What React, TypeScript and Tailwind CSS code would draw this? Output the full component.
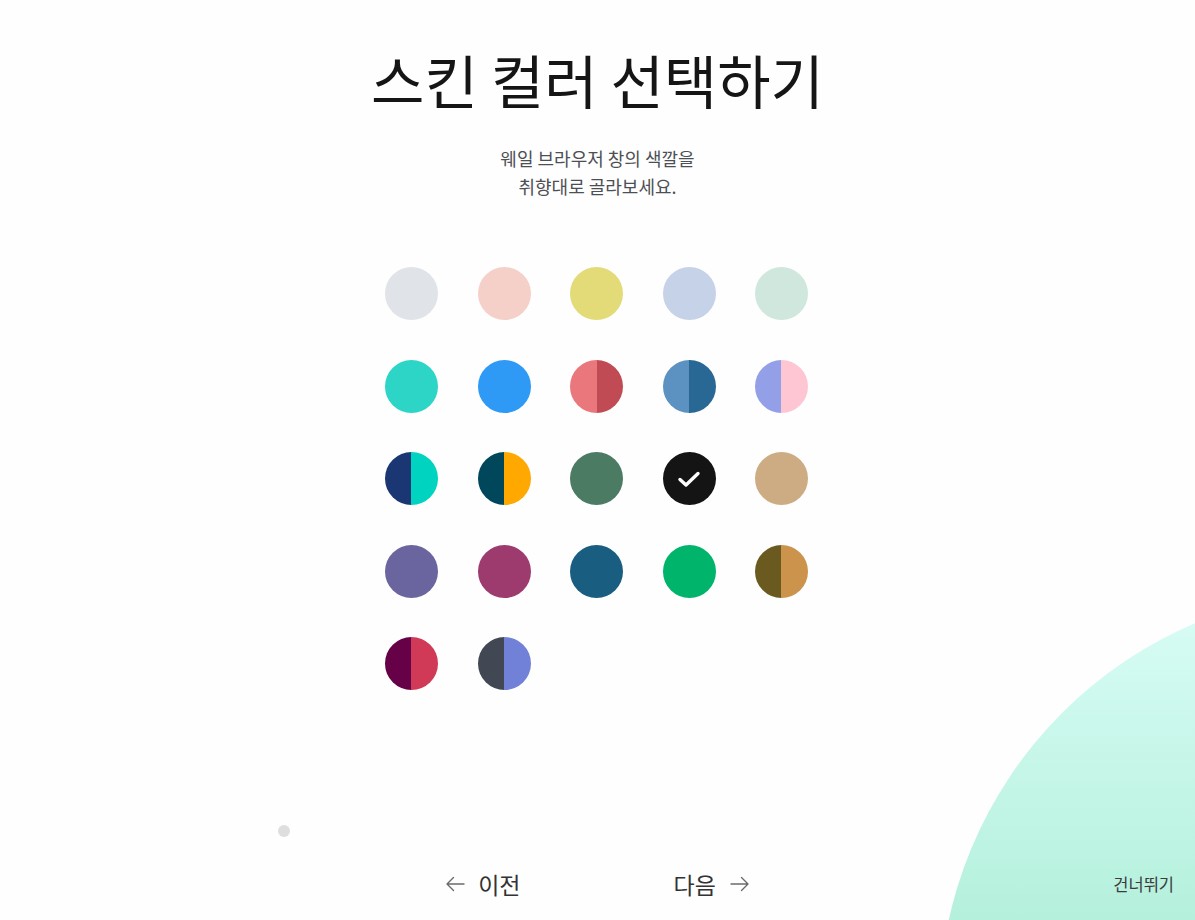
import React from "react";

type Swatch = { a: string; b?: string; selected?: boolean };

const swatches: Swatch[] = [
  { a: "#e0e3e8" },
  { a: "#f5d0c8" },
  { a: "#e2db78" },
  { a: "#c5d2e8" },
  { a: "#cfe7dc" },
  { a: "#2dd5c7" },
  { a: "#2e9af5" },
  { a: "#e9777c", b: "#c14b54" },
  { a: "#5b92c1", b: "#296894" },
  { a: "#93a0e8", b: "#fec6d3" },
  { a: "#1a3773", b: "#00d4c0" },
  { a: "#01475b", b: "#ffa800" },
  { a: "#4c7b64" },
  { a: "#141414", selected: true },
  { a: "#cdac83" },
  { a: "#6a659e" },
  { a: "#9d3a6e" },
  { a: "#195d80" },
  { a: "#00b46b" },
  { a: "#6b5a20", b: "#cb934b" },
  { a: "#660047", b: "#d13a57" },
  { a: "#424754", b: "#7281d8" },
];

function Circle({ s }: { s: Swatch }) {
  const bg = s.b
    ? `linear-gradient(to right, ${s.a} 0%, ${s.a} 50%, ${s.b} 50%, ${s.b} 100%)`
    : s.a;
  return (
    <button
      className="w-[53px] h-[53px] rounded-full flex items-center justify-center"
      style={{ background: bg }}
    >
      {s.selected && (
        <svg width="24" height="18" viewBox="0 0 24 18" fill="none">
          <path
            d="M3 9.5 L9 15 L21 3.5"
            stroke="#ffffff"
            strokeWidth="3.4"
            strokeLinecap="round"
            strokeLinejoin="round"
          />
        </svg>
      )}
    </button>
  );
}

function ArrowLeft() {
  return (
    <svg width="20" height="16" viewBox="0 0 20 16" fill="none">
      <path d="M19 8 H2 M8.5 1.5 L2 8 L8.5 14.5" stroke="#6b6b6b" strokeWidth="1.4" strokeLinecap="round" strokeLinejoin="round" />
    </svg>
  );
}

function ArrowRight() {
  return (
    <svg width="20" height="16" viewBox="0 0 20 16" fill="none">
      <path d="M1 8 H18 M11.5 1.5 L18 8 L11.5 14.5" stroke="#6b6b6b" strokeWidth="1.4" strokeLinecap="round" strokeLinejoin="round" />
    </svg>
  );
}

export default function App() {
  return (
    <div
      className="relative w-full h-[920px] overflow-hidden bg-[#fefefe] flex flex-col items-center"
      style={{ fontFamily: '"Noto Sans CJK KR", "Noto Sans", sans-serif' }}
    >
      <div
        className="absolute w-[840px] h-[840px] rounded-full left-[939px] top-[590px]"
        style={{ background: "linear-gradient(to bottom, #dafdf6 0%, #b4f0dc 40%, #a6eacf 100%)" }}
      />
      <h1 className="relative mt-[43px] text-[58px] leading-[72px] font-normal text-[#151515]">
        스킨 컬러 선택하기
      </h1>
      <p className="relative mt-[29px] text-[18px] leading-[28px] text-[#4d4f55] text-center">
        웨일 브라우저 창의 색깔을
        <br />
        취향대로 골라보세요.
      </p>
      <div className="relative mt-[67px] mr-[2px] grid grid-cols-5 gap-x-[39.5px] gap-y-[39.5px] w-[423px]">
        {swatches.map((s, i) => (
          <Circle key={i} s={s} />
        ))}
      </div>
      <div className="relative w-full flex mt-[135px] pl-[278px]">
        <div className="w-[12px] h-[12px] rounded-full bg-[#dedede]" />
      </div>
      <div className="relative w-full flex justify-center mt-[28px] h-[38px] items-center">
        <div className="flex items-center gap-[153px] ml-[4px]">
          <button className="flex items-center gap-[13px] text-[23px] leading-[38px] text-[#333333] -ml-[4px]">
            <ArrowLeft />
            <span>이전</span>
          </button>
          <button className="flex items-center gap-[14px] text-[23px] leading-[38px] text-[#333333]">
            <span>다음</span>
            <ArrowRight />
          </button>
        </div>
        <button className="absolute right-[21px] top-0 h-[38px] flex items-center text-[16.5px] text-[#3c3c3c]">
          건너뛰기
        </button>
      </div>
    </div>
  );
}
